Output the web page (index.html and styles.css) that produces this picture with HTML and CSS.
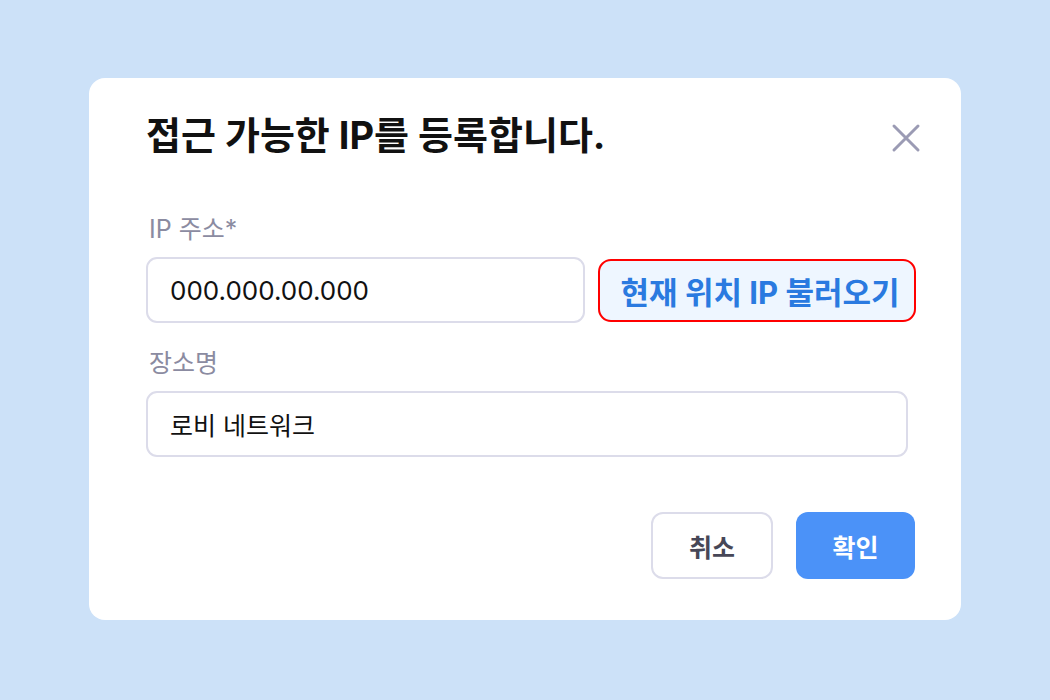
FILE: index.html
```html
<!DOCTYPE html>
<html lang="ko">
<head>
<meta charset="utf-8">
<link rel="stylesheet" href="styles.css">
</head>
<body>
<div class="page">
  <div class="modal">
    <div class="header">
      <h1 class="title">접근 가능한 IP를 등록합니다.</h1>
      <button class="close" aria-label="닫기">
        <svg width="32" height="32" viewBox="0 0 32 32"><path d="M4 4L28 28M28 4L4 28" stroke="#9b9bb4" stroke-width="3" stroke-linecap="round" fill="none"/></svg>
      </button>
    </div>
    <div class="field">
      <div class="label">IP 주소*</div>
      <div class="row">
        <div class="input ip">000.000.00.000</div>
        <button class="fetch">현재 위치 IP 불러오기</button>
      </div>
    </div>
    <div class="field">
      <div class="label">장소명</div>
      <div class="input place">로비 네트워크</div>
    </div>
    <div class="actions">
      <button class="btn cancel">취소</button>
      <button class="btn ok">확인</button>
    </div>
  </div>
</div>
</body>
</html>
```

FILE: styles.css
```css
* { box-sizing: border-box; }
html, body { margin: 0; padding: 0; }
body {
  width: 1050px;
  height: 700px;
  background: #cce1f8;
  font-family: "Inter", "Noto Sans CJK KR", "Noto Sans", sans-serif;
  overflow: hidden;
}
.page {
  padding: 78px 89px;
}
.modal {
  width: 872px;
  height: 542px;
  background: #ffffff;
  border-radius: 16px;
  padding: 30px 39px 0 57px;
}
.header {
  display: flex;
  justify-content: space-between;
  align-items: flex-start;
  height: 105px;
}
.title {
  margin: 0;
  font-size: 38px;
  font-weight: 700;
  color: #111111;
  line-height: 54px;
}
.close {
  border: 0;
  background: none;
  padding: 0;
  margin-top: 14px;
  width: 32px;
  height: 32px;
}
.field { margin-bottom: 24px; }
.label {
  font-size: 25px;
  color: #8b8ba1;
  line-height: 32px;
  margin-left: 3px;
  margin-bottom: 12px;
}
.row {
  display: flex;
  gap: 13px;
  align-items: center;
}
.input {
  height: 66px;
  border: 2px solid #dcdcea;
  border-radius: 11px;
  padding: 0 22px;
  display: flex;
  align-items: center;
  font-size: 25px;
  color: #111111;
}
.input.ip { width: 439px; font-size: 26px; }
.input.place { width: 762px; }
.fetch {
  width: 318px;
  height: 63px;
  border: 2.5px solid #ff0000;
  border-radius: 13px;
  background: #eef6ff;
  color: #2a7ae0;
  font-family: inherit;
  font-size: 31px;
  font-weight: 700;
  padding: 0 0 0 6px;
  white-space: nowrap;
}
.actions {
  display: flex;
  justify-content: flex-end;
  gap: 23px;
  margin-top: 55px;
  padding-right: 7px;
}
.btn {
  height: 67px;
  border-radius: 12px;
  font-family: inherit;
  font-size: 25px;
  font-weight: 700;
  padding: 0;
}
.cancel {
  width: 122px;
  background: #fff;
  border: 2px solid #dcdcea;
  color: #474757;
}
.ok {
  width: 119px;
  background: #4b92f8;
  border: 0;
  color: #ffffff;
}
```
